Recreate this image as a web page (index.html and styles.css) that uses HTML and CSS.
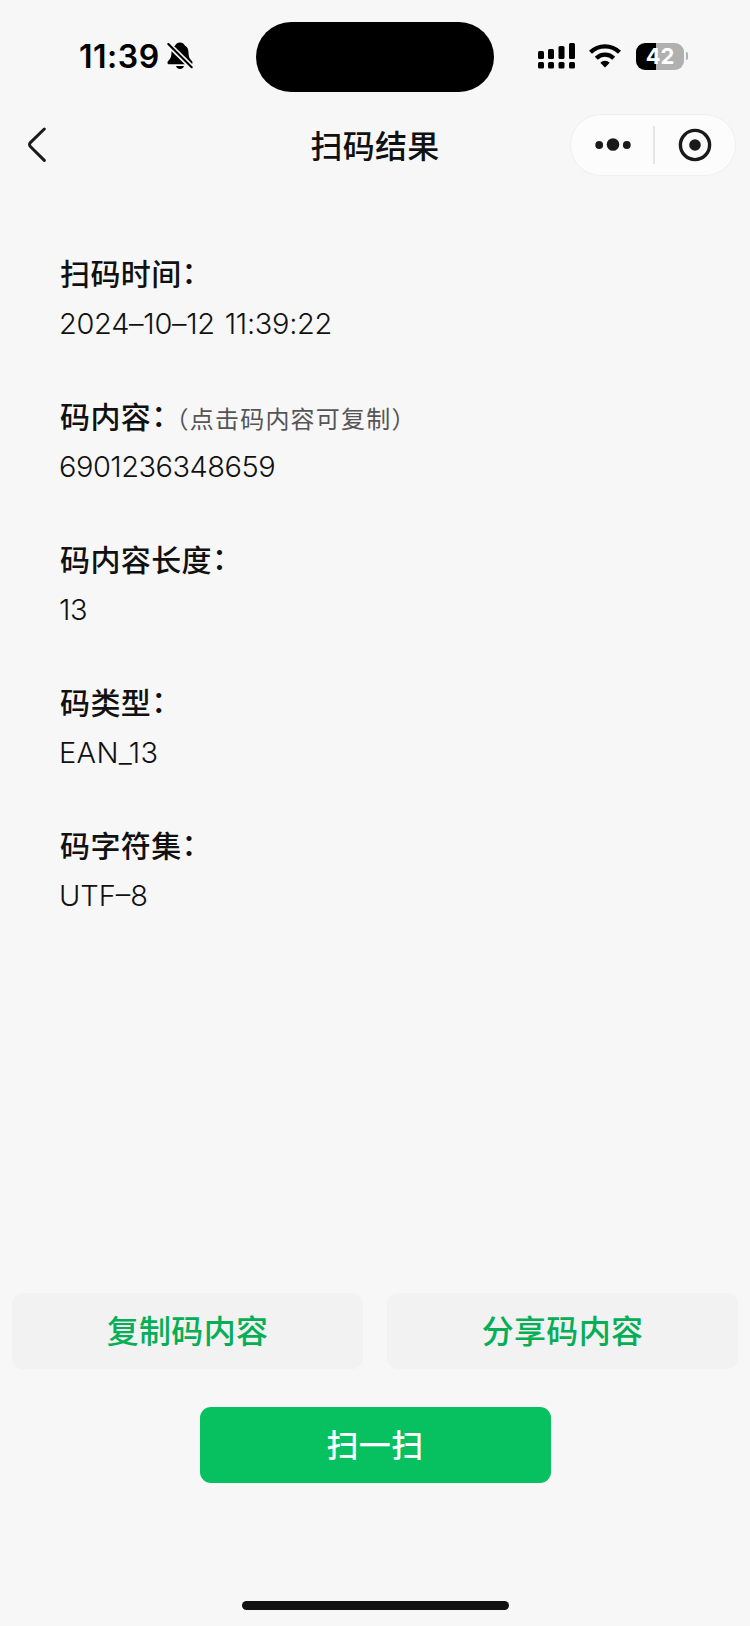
FILE: index.html
```
<!DOCTYPE html>
<html lang="zh-CN">
<head>
<meta charset="utf-8">
<meta name="viewport" content="width=device-width, initial-scale=1.0">
<title>扫码结果</title>
<link rel="stylesheet" href="styles.css">
</head>
<body>
<div class="page">
  <header class="status-bar">
    <div class="status-left">
      <span class="time">11:39</span>
      <svg class="bell" width="28" height="30" viewBox="0 0 28 30">
        <path d="M14 1.5c-2.6 0-4.3 1.4-4.8 3.1C6.500 6 5.600 8.500 5.500 11.500c-.1 4-.8 5.800-2.700 7.800-1 1-1.300 1.700-1.300 2.400 0 1 .7 1.600 1.800 1.600h21.400c1.100 0 1.800-.6 1.800-1.600 0-.7-.3-1.400-1.300-2.400-1.900-2-2.600-3.800-2.700-7.800-.1-3-1-5.500-3.700-6.900C18.300 2.900 16.600 1.500 14 1.500z" fill="#000"/>
        <path d="M10 25h8c-.5 1.900-2 3-4 3s-3.500-1.100-4-3z" fill="#000"/>
        <path d="M1.500 2.500L26.500 27" stroke="#f7f7f7" stroke-width="5.400"/>
        <path d="M2.300 3L25.700 26.200" stroke="#000" stroke-width="2.100" stroke-linecap="round"/>
      </svg>
    </div>
    <div class="island"></div>
    <div class="status-right">
      <svg class="signal" width="38" height="28" viewBox="0 0 38 28">
        <rect x="0" y="9" width="6" height="8" rx="1.500"/>
        <rect x="10" y="7" width="6" height="10" rx="1.500"/>
        <rect x="20.500" y="4" width="6" height="13" rx="1.500"/>
        <rect x="31" y="1" width="6" height="16" rx="1.500"/>
        <rect x="0" y="20" width="6" height="6.500" rx="1.500"/>
        <rect x="10" y="20" width="6" height="6.500" rx="1.500"/>
        <rect x="20.500" y="20" width="6" height="6.500" rx="1.500"/>
        <rect x="31" y="20" width="6" height="6.500" rx="1.500"/>
      </svg>
      <svg class="wifi" width="34" height="26" viewBox="0 0 34 26" fill="none" stroke="#000" stroke-width="4.200">
        <path d="M2.500 9.300a20.500 20.500 0 0 1 29 0"/>
        <path d="M8.300 15.200a12.300 12.300 0 0 1 17.400 0"/>
        <path d="M17 24.500l-4.700-4.700a6.700 6.700 0 0 1 9.400 0z" fill="#000" stroke="none"/>
      </svg>
      <div class="battery">42</div>
      <div class="battery-cap"></div>
    </div>
  </header>

  <nav class="nav-bar">
    <svg class="back" width="20" height="36" viewBox="0 0 20 36" fill="none" stroke="#1a1a1a" stroke-width="3" stroke-linecap="round" stroke-linejoin="round">
      <path d="M17.300 2L3.600 15.400q-2.200 2.200 0 4.400L17.300 33.400"/>
    </svg>
    <h1 class="title">扫码结果</h1>
    <div class="capsule">
      <svg width="36" height="14" viewBox="0 0 36 14" fill="#1a1a1a">
        <circle cx="4.200" cy="7" r="3.900"/>
        <circle cx="18" cy="6.500" r="6.300"/>
        <circle cx="31.800" cy="7" r="3.900"/>
      </svg>
      <i class="divider"></i>
      <svg width="34" height="34" viewBox="0 0 34 34">
        <circle cx="17" cy="17" r="14.600" fill="none" stroke="#1a1a1a" stroke-width="3.400"/>
        <circle cx="17" cy="17" r="5.800" fill="#1a1a1a"/>
      </svg>
    </div>
  </nav>

  <main class="content">
    <section class="item">
      <div class="label">扫码时间<span class="colon">：</span></div>
      <div class="value date">2024–10–12 11:39:22</div>
    </section>
    <section class="item">
      <div class="label">码内容<span class="colon">：</span><span class="hint">（点击码内容可复制）</span></div>
      <div class="value number">6901236348659</div>
    </section>
    <section class="item">
      <div class="label">码内容长度<span class="colon">：</span></div>
      <div class="value number">13</div>
    </section>
    <section class="item">
      <div class="label">码类型<span class="colon">：</span></div>
      <div class="value type">EAN_13</div>
    </section>
    <section class="item">
      <div class="label">码字符集<span class="colon">：</span></div>
      <div class="value">UTF–8</div>
    </section>
  </main>

  <footer class="footer">
    <div class="btn-row">
      <button class="btn">复制码内容</button>
      <button class="btn">分享码内容</button>
    </div>
    <button class="btn btn-primary">扫一扫</button>
    <div class="home-bar"></div>
  </footer>
</div>
</body>
</html>
```
FILE: styles.css
```
* {
  box-sizing: border-box;
}
body {
  margin: 0;
  background: #f7f7f7;
  color: #111;
  font-family: Inter, "Noto Sans CJK SC", sans-serif;
}
svg {
  display: block;
  flex: none;
}
.page {
  display: flex;
  flex-direction: column;
  height: 1626px;
}

/* 状态栏 */
.status-bar {
  display: grid;
  grid-template-columns: 256px 238px 1fr;
  height: 114px;
  padding-top: 21px;
}
.status-left,
.status-right {
  display: flex;
  align-items: center;
  height: 70px;
}
.status-left {
  padding-left: 79px;
}
.time {
  width: 87px;
  color: #000;
  font-size: 32px;
  font-weight: 600;
  letter-spacing: 0.5px;
}
.island {
  height: 70px;
  margin-top: 1px;
  border-radius: 35px;
  background: #000;
}
.status-right {
  padding-left: 44px;
}
.wifi {
  margin-left: 12px;
}
.battery {
  width: 48px;
  height: 27px;
  margin-left: 14px;
  border-radius: 9px;
  background: linear-gradient(to right, #000 42%, #b0b0b0 42%);
  color: #fff;
  font-size: 22px;
  font-weight: 700;
  line-height: 27px;
  text-align: center;
}
.battery-cap {
  width: 2px;
  height: 8px;
  margin-left: 2px;
  border-radius: 0 3px 3px 0;
  background: #b0b0b0;
}

/* 导航栏 */
.nav-bar {
  display: grid;
  grid-template-columns: 180px 1fr 180px;
  align-items: center;
  height: 62px;
  padding: 0 14px;
}
.back {
  margin-left: 13px;
}
.title {
  margin: 4px 0 0;
  font-size: 32px;
  font-weight: 500;
  letter-spacing: 0.3px;
  line-height: 44px;
  text-align: center;
}
.capsule {
  display: flex;
  align-items: center;
  justify-content: space-between;
  justify-self: end;
  width: 166px;
  height: 62px;
  padding: 0 23px 0 24px;
  border: 1px solid #efefef;
  border-radius: 31px;
  background: #fcfcfc;
}
.divider {
  width: 2px;
  height: 38px;
  margin-right: 2px;
  background: #e5e5e5;
}

/* 扫码信息 */
.content {
  padding: 73px 59px 0;
}
.item {
  height: 143px;
}
.label {
  height: 50px;
  padding-left: 1px;
  font-size: 30px;
  font-weight: 500;
  letter-spacing: 0.4px;
  line-height: 50px;
  white-space: nowrap;
}
.colon {
  font-feature-settings: "halt";
  line-height: 1;
  vertical-align: 2px;
}
.hint {
  margin-left: 10px;
  color: #555;
  font-size: 24px;
  font-weight: 400;
  font-feature-settings: "halt";
  letter-spacing: 1.2px;
  line-height: 1;
}
.value {
  height: 50px;
  font-size: 29px;
  font-weight: 300;
  line-height: 50px;
}
.number {
  letter-spacing: -0.5px;
}
.date {
  letter-spacing: -0.3px;
  word-spacing: 2px;
}
.type {
  letter-spacing: 0.3px;
}

/* 底部按钮 */
.footer {
  display: flex;
  flex-direction: column;
  align-items: center;
  margin-top: auto;
  padding: 0 12px 16px;
}
.btn-row {
  display: flex;
  justify-content: space-between;
  width: 100%;
  margin-bottom: 38px;
}
.btn {
  width: 351px;
  height: 76px;
  padding: 0 0 5px;
  border: 0;
  border-radius: 11px;
  background: #f2f2f2;
  color: #06ae56;
  font-family: inherit;
  font-size: 32px;
  font-weight: 500;
  letter-spacing: 0.3px;
}
.btn-primary {
  background: #07c160;
  color: #fff;
}
.home-bar {
  width: 267px;
  height: 9px;
  margin-top: 118px;
  border-radius: 5px;
  background: #111;
}
```
